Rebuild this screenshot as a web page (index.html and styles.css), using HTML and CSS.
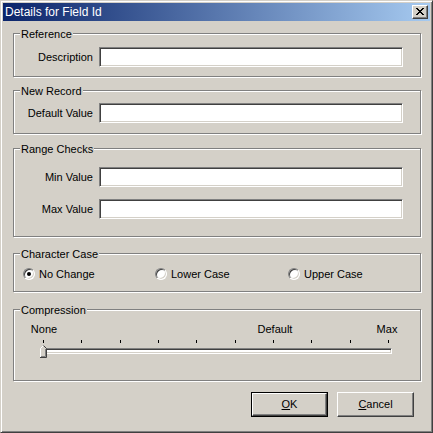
FILE: index.html
```html
<!DOCTYPE html>
<html>
<head>
<meta charset="utf-8">
<title>Details for Field Id</title>
<link rel="stylesheet" href="styles.css">
</head>
<body>
<div class="window">
  <div class="titlebar">
    <span class="title">Details for Field Id</span>
    <span class="close">
      <svg width="8" height="7" viewBox="0 0 8 7" shape-rendering="crispEdges"><path fill="#000" d="M0 0h2v1H0zM6 0h2v1H6zM1 1h2v1H1zM5 1h2v1H5zM2 2h4v1H2zM3 3h2v1H3zM2 4h4v1H2zM1 5h2v1H1zM5 5h2v1H5zM0 6h2v1H0zM6 6h2v1H6z"/></svg>
    </span>
  </div>
  <div class="content">
    <div class="group g-ref">
      <span class="legend">Reference</span>
      <div class="row r-ref"><span class="label">Description</span><span class="input"></span></div>
    </div>
    <div class="group g-new">
      <span class="legend">New Record</span>
      <div class="row r-new"><span class="label">Default Value</span><span class="input"></span></div>
    </div>
    <div class="group g-range">
      <span class="legend">Range Checks</span>
      <div class="row r-min"><span class="label">Min Value</span><span class="input"></span></div>
      <div class="row r-max"><span class="label">Max Value</span><span class="input"></span></div>
    </div>
    <div class="group g-case">
      <span class="legend">Character Case</span>
      <div class="radios">
        <span class="opt"><span class="radio checked"><span class="dot"></span></span>No Change</span>
        <span class="opt"><span class="radio"></span>Lower Case</span>
        <span class="opt"><span class="radio"></span>Upper Case</span>
      </div>
    </div>
    <div class="group g-comp">
      <span class="legend">Compression</span>
      <div class="scale">
        <span class="sl sl-none">None</span>
        <span class="sl sl-def">Default</span>
        <span class="sl sl-max">Max</span>
      </div>
      <div class="ticks">
        <i></i><i></i><i></i><i></i><i></i><i></i><i></i><i></i><i></i><i></i>
      </div>
      <div class="slider">
        <div class="channel"></div>
        <svg class="thumb" width="7" height="13" viewBox="0 0 7 13">
          <path d="M0.5 3.5L3.5 0.5L6.5 3.5V12.5H0.5Z" fill="#d4d0c8"/>
          <polyline points="0.5,12 0.5,3.5 3.5,0.5" fill="none" stroke="#fff"/>
          <polyline points="3.5,0.5 6.5,3.5 6.5,12.5 0,12.5" fill="none" stroke="#404040"/>
          <polyline points="5.5,4 5.5,11.5 1,11.5" fill="none" stroke="#808080"/>
        </svg>
      </div>
    </div>
    <div class="buttons">
      <span class="btn default"><span class="btn-in"><u>O</u>K</span></span>
      <span class="btn"><span class="btn-in"><u>C</u>ancel</span></span>
    </div>
  </div>
</div>
</body>
</html>
```
FILE: styles.css
```css
html, body {
  margin: 0;
  padding: 0;
  background: #d4d0c8;
}
body {
  font-family: "Liberation Sans", Arial, sans-serif;
  font-size: 11px;
  color: #000;
}
.window {
  width: 433px;
  height: 433px;
  box-sizing: border-box;
  border: 1px solid;
  border-color: #d4d0c8 #404040 #404040 #d4d0c8;
  box-shadow: inset 1px 1px 0 #fff, inset -1px -1px 0 #808080;
  padding: 2px;
  display: flex;
  flex-direction: column;
}
.titlebar {
  height: 18px;
  flex: none;
  background: linear-gradient(to right, #0a246a, #a6caf0);
  display: flex;
  align-items: center;
  justify-content: space-between;
  padding: 0 2px 0 2px;
}
.title {
  color: #fff;
  font-size: 12px;
  line-height: 14px;
}
.close {
  width: 16px;
  height: 14px;
  box-sizing: border-box;
  background: #d4d0c8;
  border: 1px solid;
  border-color: #fff #404040 #404040 #fff;
  box-shadow: inset -1px -1px 0 #808080;
  display: flex;
  align-items: center;
  justify-content: center;
  padding: 0 1px 1px 0;
}
.close svg { display: block; }
.content {
  flex: 1;
  display: flex;
  flex-direction: column;
  padding: 12px 0 0 10px;
}
.group {
  width: 408px;
  box-sizing: border-box;
  border: 1px solid #808080;
  box-shadow: inset 1px 1px 0 #fff, 1px 1px 0 #fff;
  display: flex;
  flex-direction: column;
  flex: none;
}
.legend {
  align-self: flex-start;
  margin: -6px 0 0 6px;
  padding: 0 1px;
  line-height: 13px;
  height: 13px;
  background: #d4d0c8;
}
.g-ref { height: 44px; }
.g-new { height: 44px; margin-top: 13px; }
.g-range { height: 89px; margin-top: 14px; }
.g-case { height: 39px; margin-top: 16px; }
.g-comp { height: 72px; margin-top: 17px; }
.row {
  display: flex;
  align-items: center;
}
.r-ref { margin-top: 6px; }
.r-new { margin-top: 5px; }
.r-min { margin-top: 11px; }
.r-max { margin-top: 12px; }
.label {
  width: 79px;
  text-align: right;
  margin-right: 6px;
  white-space: nowrap;
}
.input {
  width: 304px;
  height: 20px;
  box-sizing: border-box;
  background: #fff;
  border: 1px solid;
  border-color: #808080 #fff #fff #808080;
  box-shadow: inset 1px 1px 0 #404040, inset -1px -1px 0 #d4d0c8;
}
.radios {
  display: grid;
  grid-template-columns: 132px 133px auto;
  margin: 6px 0 0 9px;
  height: 14px;
  align-items: center;
}
.opt {
  display: flex;
  align-items: center;
  gap: 4px;
  white-space: nowrap;
}
.radio {
  width: 12px;
  height: 12px;
  box-sizing: border-box;
  border-radius: 50%;
  background: #fff;
  border: 1px solid;
  border-color: #808080 #fff #fff #808080;
  box-shadow: inset 1px 1px 0 #404040, inset -1px -1px 0 #d4d0c8;
  display: flex;
  align-items: center;
  justify-content: center;
  flex: none;
}
.dot {
  width: 4px;
  height: 4px;
  border-radius: 50%;
  background: #000;
}
.scale {
  display: flex;
  margin-top: 6px;
  height: 13px;
  line-height: 13px;
}
.sl {
  text-align: center;
  white-space: nowrap;
}
.sl-none { width: 40px; margin-left: 10px; }
.sl-def { width: 60px; margin-left: 181px; }
.sl-max { width: 40px; margin-left: 62px; }
.ticks {
  display: flex;
  justify-content: space-between;
  width: 346px;
  height: 3px;
  margin: 4px 0 0 29px;
}
.ticks i {
  display: block;
  width: 1px;
  height: 3px;
  background: #000;
}
.slider {
  position: relative;
  height: 13px;
  margin: 2px 0 0 27px;
  width: 351px;
}
.channel {
  margin-top: 3px;
  height: 6px;
  box-sizing: border-box;
  border: 1px solid;
  border-color: #808080 #fff #fff #808080;
  box-shadow: inset 1px 1px 0 #404040, inset -1px -1px 0 #d4d0c8;
  background: #fff;
}
.thumb {
  position: absolute;
  left: -1px;
  top: 0;
  display: block;
}
.buttons {
  display: flex;
  justify-content: flex-end;
  gap: 9px;
  margin-top: 11px;
  padding-right: 16px;
}
.btn {
  width: 77px;
  height: 25px;
  box-sizing: border-box;
  border: 1px solid;
  border-color: #fff #404040 #404040 #fff;
  box-shadow: inset -1px -1px 0 #808080;
  display: flex;
}
.btn.default {
  border: 1px solid #000;
  box-shadow: none;
}
.btn-in {
  flex: 1;
  display: flex;
  align-items: center;
  justify-content: center;
  padding-bottom: 1px;
}
.btn.default .btn-in {
  border: 1px solid;
  border-color: #fff #404040 #404040 #fff;
  box-shadow: inset -1px -1px 0 #808080;
}
```
